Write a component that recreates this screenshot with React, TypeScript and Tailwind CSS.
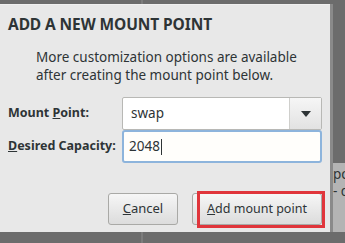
export default function App() {
  const font = { fontFamily: '"Noto Sans", "Open Sans", sans-serif' };
  return (
    <div className="w-[345px] h-[243px] bg-[#6c6c6c] flex flex-col overflow-hidden text-[#2e3436]" style={font}>
      <div className="h-[4px] flex">
        <div className="w-[141px]" />
        <div className="w-[2px] bg-[#7c7c7c]" />
      </div>
      <div className="flex h-[228px]">
        <div className="w-[330px] shrink-0 bg-[#e8e8e8] border-t border-[#f0f0f0] flex flex-col">
          <h1 className="pl-[8px] pt-[9px] text-[15.5px] leading-[20px] font-bold tracking-[-0.1px]">ADD A NEW MOUNT POINT</h1>
          <p className="pl-[36px] pt-[14px] text-[13.5px] leading-[18px]">
            More customization options are available
            <br />
            after creating the mount point below.
          </p>
          <div className="mt-[13px] pl-[8px] pr-[8px] flex flex-col">
            <div className="flex items-center h-[33px]">
              <label className="w-[114px] text-[12.5px] font-bold">
                Mount <span className="underline">P</span>oint:
              </label>
              <div className="flex-1 h-[33px] flex bg-white border border-[#b8b8b5] rounded-[2px]">
                <div className="flex-1 flex items-center pl-[8px] text-[13.5px]">swap</div>
                <div className="w-[32px] border-l border-[#cfcfcc] bg-gradient-to-b from-[#f6f6f6] to-[#e2e2e2] flex items-center justify-center">
                  <svg width="10" height="6" viewBox="0 0 10 6">
                    <path d="M0 0 H10 L5 6 Z" fill="#2e3436" />
                  </svg>
                </div>
              </div>
            </div>
            <div className="flex items-center h-[33px]">
              <label className="w-[114px] text-[12.5px] font-bold whitespace-nowrap">
                <span className="underline">D</span>esired Capacity:
              </label>
              <div className="flex-1 h-[33px] flex items-center bg-[#fffefb] border-2 border-[#8db4dc] rounded-[3px] pl-[5px] text-[13.5px]">
                2048<span className="w-px h-[16px] bg-[#2e3436] ml-px" />
              </div>
            </div>
          </div>
          <div className="mt-auto mb-[7px] flex justify-end pr-[8px] gap-[14px]">
            <button className="w-[70px] h-[32px] rounded-[3px] border border-[#a9a9a6] bg-gradient-to-b from-[#f6f6f6] to-[#dcdcdc] text-[13px]">
              <span className="underline">C</span>ancel
            </button>
            <div className="relative">
              <button className="w-[130px] h-[32px] rounded-[3px] border border-[#a9a9a6] bg-gradient-to-b from-[#f6f6f6] to-[#dcdcdc] text-[12.5px]">
                <span className="underline">A</span>dd mount point
              </button>
              <div className="absolute left-[5px] -top-[2px] w-[128px] h-[37px] border-[3px] border-[#e0353b]" />
            </div>
          </div>
        </div>
        <div className="w-[3px] shrink-0 bg-[#8a8a8a]" />
        <div className="flex-1 min-w-0 overflow-hidden flex flex-col">
          <div className="h-[159px] shrink-0" />
          <div className="flex-1 bg-[#b4b4b4] text-[13.5px] leading-[17px] pt-[3px] whitespace-nowrap">
            <div>poi</div>
            <div>- d</div>
          </div>
        </div>
      </div>
      <div className="flex-1 flex">
        <div className="w-[141px]" />
        <div className="w-[2px] bg-[#7c7c7c]" />
      </div>
    </div>
  );
}
